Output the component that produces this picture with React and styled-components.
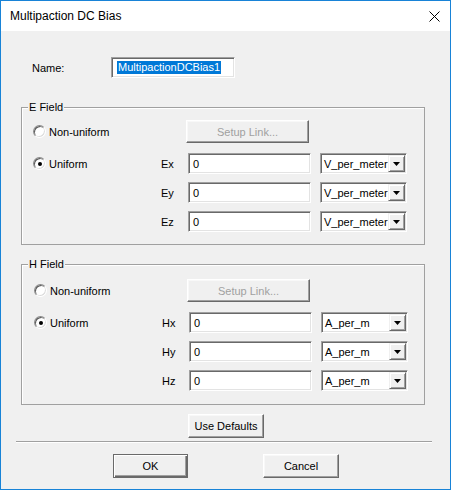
import React from "react";
import styled, { createGlobalStyle } from "styled-components";

const Global = createGlobalStyle`
  html, body { margin: 0; padding: 0; background: #fff; }
  body { font-family: "Liberation Sans", Arial, sans-serif; }
  * { box-sizing: border-box; }
`;

const Window = styled.div`
  width: 451px;
  height: 490px;
  border: 1px solid #1883d7;
  background: #f0f0f0;
  display: flex;
  flex-direction: column;
  font-family: "Liberation Sans", Arial, sans-serif;
  font-size: 11px;
  color: #000;
`;

const TitleBar = styled.div`
  flex: none;
  height: 30px;
  background: #fff;
  display: flex;
  align-items: center;
  justify-content: space-between;
  padding: 0 10px 0 9px;
  font-size: 12px;
  color: #000;
`;

const CloseIcon = () => (
  <svg width="11" height="11" viewBox="0 0 11 11">
    <path d="M0.5 0.5 L10.5 10.5 M10.5 0.5 L0.5 10.5" stroke="#000" strokeWidth="1" />
  </svg>
);

const NameRow = styled.div`
  margin-top: 26px;
  padding-left: 31px;
  display: flex;
  align-items: center;
  height: 21px;
`;

const NameLabel = styled.span`
  width: 79px;
`;

const Sunken = styled.div`
  height: 21px;
  background: #fff;
  border: 1px solid;
  border-color: #a0a0a0 #fff #fff #a0a0a0;
  box-shadow: inset 1px 1px #696969, inset -1px -1px #e3e3e3;
  display: flex;
  align-items: center;
  white-space: nowrap;
  overflow: hidden;
`;

const NameBox = styled(Sunken)`
  width: 124px;
  padding-left: 5px;
`;

const Selected = styled.span`
  background: #0078d7;
  color: #fff;
  line-height: 13px;
  padding: 0 1px;
`;

const Group = styled.div`
  position: relative;
  margin: ${(p) => p.$gapTop}px 0 0 20px;
  width: 404px;
  height: ${(p) => p.$height}px;
  border: 1px solid #a0a0a0;
  box-shadow: inset 1px 1px #fff;
  padding: ${(p) => p.$padTop}px 0 0 ${(p) => p.$padLeft}px;
`;

const Caption = styled.span`
  position: absolute;
  top: -7px;
  left: 6px;
  padding: 0 1px;
  line-height: 13px;
  background: #f0f0f0;
`;

const FieldGrid = styled.div`
  display: grid;
  grid-template-columns: 128px 27px 132px 87px;
  grid-template-rows: 25px 21px 21px 21px;
  row-gap: 8px;
  align-items: center;
`;

const RadioOption = styled.label`
  grid-column: 1;
  grid-row: ${(p) => p.$row};
  align-self: start;
  height: ${(p) => (p.$row === 1 ? 23 : 21)}px;
  display: flex;
  align-items: center;
  gap: 3px;
`;

const RadioCircle = styled.span`
  width: 13px;
  height: 13px;
  border-radius: 50%;
  border: 1px solid;
  border-color: #8a8a8a #fff #fff #8a8a8a;
  box-shadow: inset 1px 1px #5a5a5a, inset -1px -1px #dcdcdc;
  background: #fff;
  display: flex;
  align-items: center;
  justify-content: center;
  &::after {
    content: "";
    width: 4px;
    height: 4px;
    border-radius: 50%;
    background: ${(p) => (p.$checked ? "#000" : "transparent")};
  }
`;

const RaisedButton = styled.button`
  font: inherit;
  font-size: 11px;
  height: 24px;
  padding: 0;
  background: #f0f0f0;
  color: ${(p) => (p.disabled ? "#a0a0a0" : "#000")};
  border: 1px solid;
  border-color: ${(p) => (p.$default ? "#6a6a6a" : "#fff #696969 #696969 #fff")};
  box-shadow: ${(p) =>
    p.$default
      ? "inset 1px 1px #fff, inset -1px -1px #696969, inset -2px -2px #a0a0a0"
      : "inset -1px -1px #a0a0a0, inset 1px 1px #f8f8f8"};
  cursor: default;
`;

const SetupButton = styled(RaisedButton)`
  grid-column: 3;
  grid-row: 1;
  align-self: start;
  width: 123px;
  height: 23px;
  margin-left: -2px;
`;

const AxisLabel = styled.span`
  grid-column: 2;
`;

const ValueBox = styled(Sunken)`
  grid-column: 3;
  width: 123px;
  padding-left: 4px;
`;

const UnitSelect = styled(Sunken)`
  grid-column: 4;
  width: 87px;
  padding: 1px;
`;

const UnitText = styled.span`
  flex: 1;
  padding-left: 2px;
  overflow: hidden;
`;

const ArrowButton = styled.span`
  flex: none;
  width: 17px;
  height: 17px;
  background: #f0f0f0;
  border: 1px solid;
  border-color: #f0f0f0 #696969 #696969 #f0f0f0;
  box-shadow: inset 1px 1px #fff, inset -1px -1px #a0a0a0;
  display: flex;
  align-items: center;
  justify-content: center;
`;

const DownTriangle = () => (
  <svg width="7" height="4" viewBox="0 0 7 4">
    <polygon points="0,0 7,0 3.5,4" fill="#000" />
  </svg>
);

const DefaultsButton = styled(RaisedButton)`
  margin: 9px 0 0 187px;
  width: 76px;
  align-self: flex-start;
`;

const Separator = styled.div`
  margin: 3px 0 0 15px;
  width: 416px;
  border-top: 1px solid #a0a0a0;
  border-bottom: 1px solid #fff;
`;

const ButtonRow = styled.div`
  margin-top: 11px;
  padding-left: 112px;
  display: flex;
  gap: 75px;
`;

const DialogButton = styled(RaisedButton)`
  width: ${(p) => p.$w}px;
`;

function FieldGroup({ title, axes, unit, gapTop, height, padTop, padLeft }) {
  return (
    <Group $gapTop={gapTop} $height={height} $padTop={padTop} $padLeft={padLeft}>
      <Caption>{title}</Caption>
      <FieldGrid>
        <RadioOption $row={1}>
          <RadioCircle />
          <span>Non-uniform</span>
        </RadioOption>
        <SetupButton disabled>Setup Link...</SetupButton>
        <RadioOption $row={2}>
          <RadioCircle $checked />
          <span>Uniform</span>
        </RadioOption>
        {axes.map((axis, i) => (
          <React.Fragment key={axis}>
            <AxisLabel style={{ gridRow: i + 2 }}>{axis}</AxisLabel>
            <ValueBox style={{ gridRow: i + 2 }}>0</ValueBox>
            <UnitSelect style={{ gridRow: i + 2 }}>
              <UnitText>{unit}</UnitText>
              <ArrowButton>
                <DownTriangle />
              </ArrowButton>
            </UnitSelect>
          </React.Fragment>
        ))}
      </FieldGrid>
    </Group>
  );
}

export default function App() {
  return (
    <>
      <Global />
      <Window>
        <TitleBar>
          <span>Multipaction DC Bias</span>
          <CloseIcon />
        </TitleBar>
        <NameRow>
          <NameLabel>Name:</NameLabel>
          <NameBox>
            <Selected>MultipactionDCBias1</Selected>
          </NameBox>
        </NameRow>
        <FieldGroup
          title="E Field"
          axes={["Ex", "Ey", "Ez"]}
          unit="V_per_meter"
          gapTop={29}
          height={138}
          padTop={12}
          padLeft={11}
        />
        <FieldGroup
          title="H Field"
          axes={["Hx", "Hy", "Hz"]}
          unit="A_per_m"
          gapTop={19}
          height={141}
          padTop={14}
          padLeft={12}
        />
        <DefaultsButton>Use Defaults</DefaultsButton>
        <Separator />
        <ButtonRow>
          <DialogButton $w={75} $default>OK</DialogButton>
          <DialogButton $w={76}>Cancel</DialogButton>
        </ButtonRow>
      </Window>
    </>
  );
}
